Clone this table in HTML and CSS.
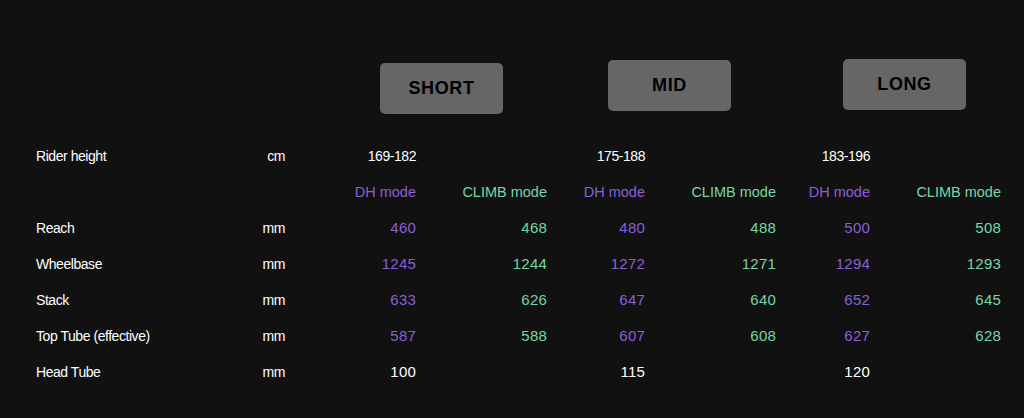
FILE: index.html
```html
<!DOCTYPE html>
<html>
<head>
<meta charset="utf-8">
<link rel="stylesheet" href="styles.css">
</head>
<body>
<div class="page">
  <div class="sizes">
    <div class="size size-short">SHORT</div>
    <div class="size size-mid">MID</div>
    <div class="size size-long">LONG</div>
  </div>
  <div class="geo">
    <div class="lbl">Rider height</div><div class="unit">cm</div>
    <div class="val w rng">169-182</div><div class="val"></div>
    <div class="val w rng">175-188</div><div class="val"></div>
    <div class="val w rng">183-196</div><div class="val"></div>

    <div class="lbl"></div><div class="unit"></div>
    <div class="val dh mode">DH mode</div><div class="val cl mode">CLIMB mode</div>
    <div class="val dh mode">DH mode</div><div class="val cl mode">CLIMB mode</div>
    <div class="val dh mode">DH mode</div><div class="val cl mode">CLIMB mode</div>

    <div class="lbl">Reach</div><div class="unit">mm</div>
    <div class="val dh">460</div><div class="val cl">468</div>
    <div class="val dh">480</div><div class="val cl">488</div>
    <div class="val dh">500</div><div class="val cl">508</div>

    <div class="lbl">Wheelbase</div><div class="unit">mm</div>
    <div class="val dh">1245</div><div class="val cl">1244</div>
    <div class="val dh">1272</div><div class="val cl">1271</div>
    <div class="val dh">1294</div><div class="val cl">1293</div>

    <div class="lbl">Stack</div><div class="unit">mm</div>
    <div class="val dh">633</div><div class="val cl">626</div>
    <div class="val dh">647</div><div class="val cl">640</div>
    <div class="val dh">652</div><div class="val cl">645</div>

    <div class="lbl">Top Tube (effective)</div><div class="unit">mm</div>
    <div class="val dh">587</div><div class="val cl">588</div>
    <div class="val dh">607</div><div class="val cl">608</div>
    <div class="val dh">627</div><div class="val cl">628</div>

    <div class="lbl">Head Tube</div><div class="unit">mm</div>
    <div class="val w">100</div><div class="val"></div>
    <div class="val w">115</div><div class="val"></div>
    <div class="val w">120</div><div class="val"></div>
  </div>
</div>
</body>
</html>
```
FILE: styles.css
```css
html, body {
  margin: 0;
  padding: 0;
  background: #111111;
}
body {
  font-family: "Liberation Sans", Arial, sans-serif;
  color: #ffffff;
  width: 1024px;
  height: 418px;
  overflow: hidden;
}
.page {
  padding: 0 0 0 36px;
}
.sizes {
  display: flex;
  align-items: flex-start;
  height: 138px;
}
.size {
  width: 123px;
  height: 51px;
  background: #666666;
  border-radius: 5px;
  color: #000000;
  font-weight: bold;
  font-size: 18px;
  letter-spacing: 0.6px;
  display: flex;
  align-items: center;
  justify-content: center;
}
.size-short { margin-left: 344px; margin-top: 63px; }
.size-mid { margin-left: 105px; margin-top: 60px; }
.size-long { margin-left: 112px; margin-top: 59px; }

.geo {
  display: grid;
  grid-template-columns: 160px 89px 131px 131px 98px 131px 94px 131px;
  grid-auto-rows: 36px;
  font-size: 14px;
  letter-spacing: -0.45px;
  align-items: center;
}
.lbl { text-align: left; color: #ffffff; }
.unit { text-align: right; color: #ffffff; }
.val {
  text-align: right;
  font-size: 15px;
  letter-spacing: 0.2px;
  margin-bottom: 2px;
}
.val.rng {
  font-size: 14px;
  letter-spacing: -0.45px;
  margin-bottom: 0;
}
.val.mode {
  font-size: 14.5px;
  letter-spacing: 0;
  margin-bottom: 1px;
}
.w { color: #ffffff; }
.dh { color: #8a5fd8; }
.cl { color: #76d6a6; }
```
